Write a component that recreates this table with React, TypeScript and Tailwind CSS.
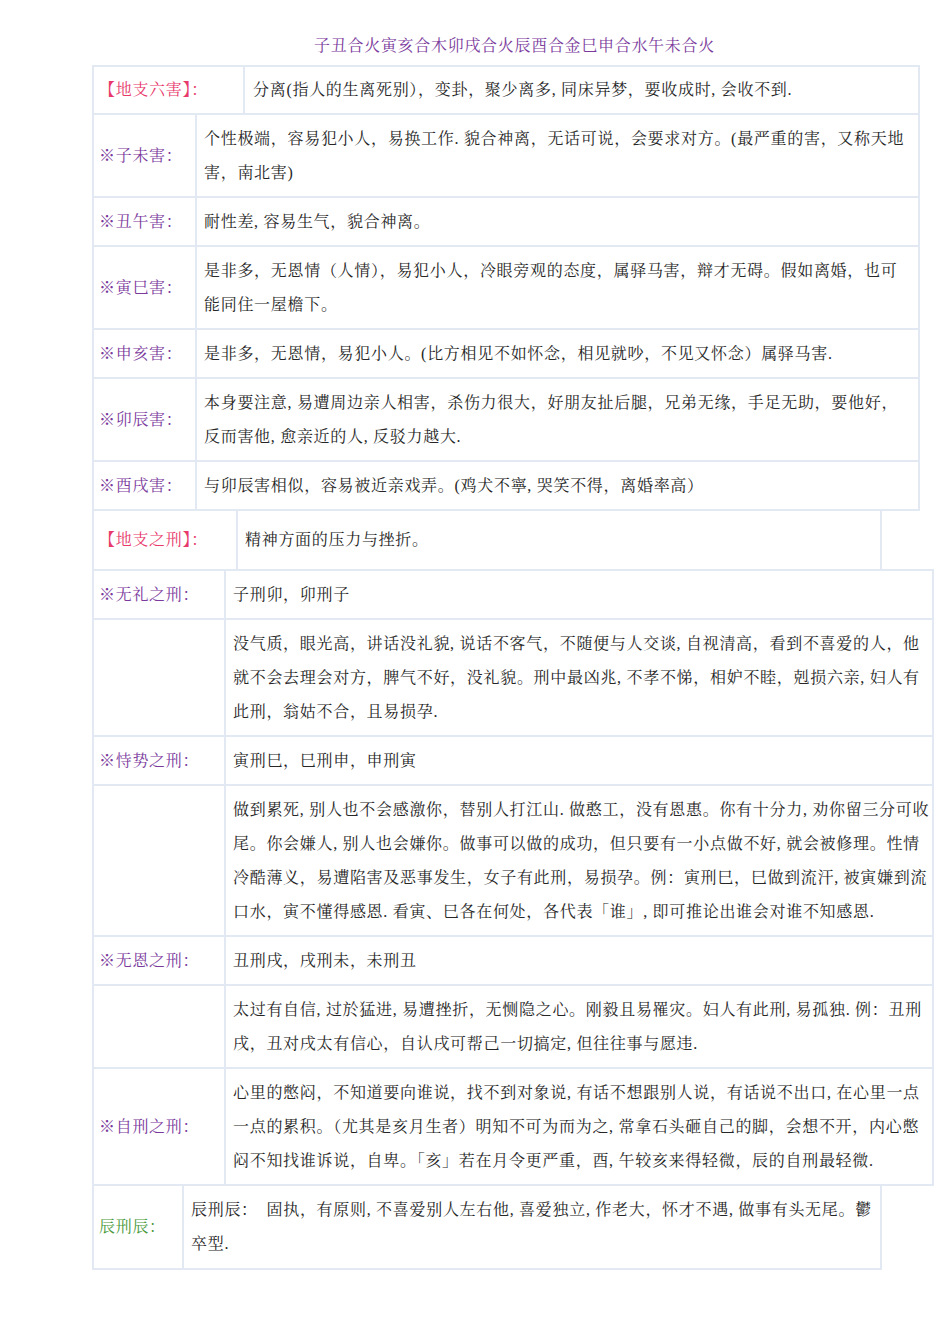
import React from "react";

type RowProps = {
  label?: string;
  color?: string;
  lw: string;
  lines: string[];
  py?: string;
  first?: boolean;
  pl?: string;
};

const FONT = {
  fontFamily:
    '"Liberation Serif", "Noto Serif CJK SC", "Noto Sans CJK SC", serif',
};

function Row({ label, color = "text-[#7a3a9c]", lw, lines, py = "py-[6.5px]", first, pl = "pl-[7px]" }: RowProps) {
  return (
    <div className={`flex ${first ? "" : "border-t-2 border-[#e3e9f2]"}`}>
      <div className={`${lw} shrink-0 border-r-2 border-[#e3e9f2] flex items-center pl-[5px] text-[16px] leading-[34px] tracking-[0.7px] ${color}`}>
        {label}
      </div>
      <div className={`flex-1 ${pl} pr-[2px] ${py} text-[16px] leading-[34px] tracking-[0.7px] text-[#262626]`}>
        {lines.map((l, i) => (
          <div key={i} className="whitespace-nowrap">
            {l}
          </div>
        ))}
      </div>
    </div>
  );
}

export default function App() {
  return (
    <div className="w-[950px] min-h-[1344px] bg-white" style={FONT}>
      <div className="ml-[92px] w-[845px] flex justify-center pt-[29px] mb-[2px] leading-[34px] text-[16px] tracking-[0.7px] text-[#7a3a9c]">
        子丑合火寅亥合木卯戌合火辰酉合金巳申合水午未合火
      </div>

      {/* Table 1 */}
      <div className="ml-[92px] w-[828px] border-2 border-[#e3e9f2]">
        <Row
          first
          label="【地支六害】："
          color="text-[#e8396b]"
          lw="w-[151px]"
          pl="pl-[8px]"
          py="py-[6px]"
          lines={["分离(指人的生离死别），变卦，聚少离多, 同床异梦，要收成时, 会收不到."]}
        />
        <Row
          label="※子未害："
          lw="w-[103px]"
          lines={[
            "个性极端，容易犯小人，易换工作. 貌合神离，无话可说，会要求对方。(最严重的害，又称天地",
            "害，南北害)",
          ]}
        />
        <Row label="※丑午害：" lw="w-[103px]" lines={["耐性差, 容易生气，貌合神离。"]} />
        <Row
          label="※寅巳害："
          lw="w-[103px]"
          lines={[
            "是非多，无恩情（人情），易犯小人，冷眼旁观的态度，属驿马害，辩才无碍。假如离婚，也可",
            "能同住一屋檐下。",
          ]}
        />
        <Row
          label="※申亥害："
          lw="w-[103px]"
          lines={["是非多，无恩情，易犯小人。(比方相见不如怀念，相见就吵，不见又怀念）属驿马害."]}
        />
        <Row
          label="※卯辰害："
          lw="w-[103px]"
          lines={[
            "本身要注意, 易遭周边亲人相害，杀伤力很大，好朋友扯后腿，兄弟无缘，手足无助，要他好，",
            "反而害他, 愈亲近的人, 反驳力越大.",
          ]}
        />
        <Row
          label="※酉戌害："
          lw="w-[103px]"
          lines={["与卯辰害相似，容易被近亲戏弄。(鸡犬不寧, 哭笑不得，离婚率高）"]}
        />
      </div>

      {/* Table 2 */}
      <div className="ml-[92px] w-[790px] border-x-2 border-[#e3e9f2]">
        <Row
          first
          label="【地支之刑】："
          color="text-[#e8396b]"
          lw="w-[144px]"
          py="py-[12px]"
          lines={["精神方面的压力与挫折。"]}
        />
      </div>

      {/* Table 3 */}
      <div className="ml-[92px] w-[842px] border-2 border-[#e3e9f2]">
        <Row first label="※无礼之刑：" lw="w-[132px]" lines={["子刑卯，卯刑子"]} />
        <Row
          lw="w-[132px]"
          lines={[
            "没气质，眼光高，讲话没礼貌, 说话不客气，不随便与人交谈, 自视清高，看到不喜爱的人，他",
            "就不会去理会对方，脾气不好，没礼貌。刑中最凶兆, 不孝不悌，相妒不睦，剋损六亲, 妇人有",
            "此刑，翁姑不合，且易损孕.",
          ]}
        />
        <Row label="※恃势之刑：" lw="w-[132px]" lines={["寅刑巳，巳刑申，申刑寅"]} />
        <Row
          lw="w-[132px]"
          lines={[
            "做到累死, 别人也不会感激你，替别人打江山. 做憨工，没有恩惠。你有十分力, 劝你留三分可收",
            "尾。你会嫌人, 别人也会嫌你。做事可以做的成功，但只要有一小点做不好, 就会被修理。性情",
            "冷酷薄义，易遭陷害及恶事发生，女子有此刑，易损孕。例：寅刑巳，巳做到流汗, 被寅嫌到流",
            "口水，寅不懂得感恩. 看寅、巳各在何处，各代表「谁」, 即可推论出谁会对谁不知感恩.",
          ]}
        />
        <Row label="※无恩之刑：" lw="w-[132px]" lines={["丑刑戌，戌刑未，未刑丑"]} />
        <Row
          lw="w-[132px]"
          lines={[
            "太过有自信, 过於猛进, 易遭挫折，无恻隐之心。刚毅且易罹灾。妇人有此刑, 易孤独. 例：丑刑",
            "戌，丑对戌太有信心，自认戌可帮己一切搞定, 但往往事与愿违.",
          ]}
        />
        <Row
          label="※自刑之刑："
          lw="w-[132px]"
          lines={[
            "心里的憋闷，不知道要向谁说，找不到对象说, 有话不想跟别人说，有话说不出口, 在心里一点",
            "一点的累积。（尤其是亥月生者）明知不可为而为之, 常拿石头砸自己的脚，会想不开，内心憋",
            "闷不知找谁诉说，自卑。「亥」若在月令更严重，酉, 午较亥来得轻微，辰的自刑最轻微.",
          ]}
        />
      </div>

      {/* Table 4 */}
      <div className="ml-[92px] w-[790px] border-x-2 border-b-2 border-[#e3e9f2]">
        <Row
          first
          label="辰刑辰："
          color="text-[#4a9a3c]"
          lw="w-[90px]"
          py="py-[7px]"
          lines={[
            "辰刑辰：　固执，有原则, 不喜爱别人左右他, 喜爱独立, 作老大，怀才不遇, 做事有头无尾。鬱",
            "卒型.",
          ]}
        />
      </div>
    </div>
  );
}
